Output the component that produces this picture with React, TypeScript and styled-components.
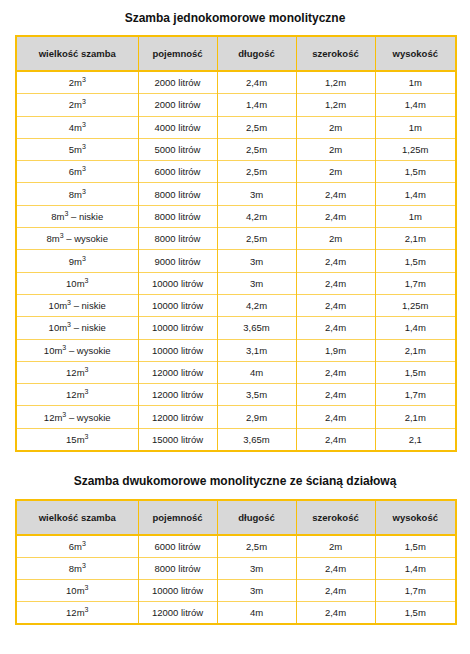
import React from 'react';
import styled, { createGlobalStyle } from 'styled-components';

const GlobalStyle = createGlobalStyle`
    html, body {
        margin: 0;
        padding: 0;
        background: #fff;
    }
    body {
        font-family: 'Liberation Sans', Arial, sans-serif;
        color: #1a1a1a;
    }
`;

const Page = styled.div`
    width: 470px;
    padding: 9px 15px 0 15px;
    box-sizing: border-box;
`;

const Title = styled.h2<{ $top: number }>`
    margin: ${(p) => p.$top}px 0 0 0;
    height: 18px;
    line-height: 18px;
    font-size: 12px;
    font-weight: 700;
    text-align: center;
    color: #111;
`;

const Table = styled.table<{ $top: number }>`
    margin-top: ${(p) => p.$top}px;
    width: 440px;
    border-collapse: collapse;
    table-layout: fixed;
    border: 2px solid #f8bf06;
`;

const HeadCell = styled.th`
    height: 33px;
    padding: 0;
    background: #d8d8d8;
    font-size: 9.5px;
    font-weight: 700;
    text-align: center;
    color: #1a1a1a;
    border-left: 1.5px solid #f8bf06;
    border-bottom: 2px solid #f8bf06;
`;

const Cell = styled.td<{ $h: number }>`
    height: ${(p) => p.$h}px;
    padding: 0;
    font-size: 9.5px;
    text-align: center;
    color: #1a1a1a;
    border-left: 1.5px solid #f8c21a;
    border-top: 1px solid #fbd35a;
`;

const Sup = styled.sup`
    font-size: 7px;
    line-height: 0;
    vertical-align: 4px;
`;

type Row = [string, string, string, string, string, string?];

const headers = ['wielkość szamba', 'pojemność', 'długość', 'szerokość', 'wysokość'];

const single: Row[] = [
    ['2', '2000 litrów', '2,4m', '1,2m', '1m'],
    ['2', '2000 litrów', '1,4m', '1,2m', '1,4m'],
    ['4', '4000 litrów', '2,5m', '2m', '1m'],
    ['5', '5000 litrów', '2,5m', '2m', '1,25m'],
    ['6', '6000 litrów', '2,5m', '2m', '1,5m'],
    ['8', '8000 litrów', '3m', '2,4m', '1,4m'],
    ['8', '8000 litrów', '4,2m', '2,4m', '1m', ' – niskie'],
    ['8', '8000 litrów', '2,5m', '2m', '2,1m', ' – wysokie'],
    ['9', '9000 litrów', '3m', '2,4m', '1,5m'],
    ['10', '10000 litrów', '3m', '2,4m', '1,7m'],
    ['10', '10000 litrów', '4,2m', '2,4m', '1,25m', ' – niskie'],
    ['10', '10000 litrów', '3,65m', '2,4m', '1,4m', ' – niskie'],
    ['10', '10000 litrów', '3,1m', '1,9m', '2,1m', ' – wysokie'],
    ['12', '12000 litrów', '4m', '2,4m', '1,5m'],
    ['12', '12000 litrów', '3,5m', '2,4m', '1,7m'],
    ['12', '12000 litrów', '2,9m', '2,4m', '2,1m', ' – wysokie'],
    ['15', '15000 litrów', '3,65m', '2,4m', '2,1'],
];

const double: Row[] = [
    ['6', '6000 litrów', '2,5m', '2m', '1,5m'],
    ['8', '8000 litrów', '3m', '2,4m', '1,4m'],
    ['10', '10000 litrów', '3m', '2,4m', '1,7m'],
    ['12', '12000 litrów', '4m', '2,4m', '1,5m'],
];

const colWidths = [122, 79, 79, 79, 81];

const SizeTable: React.FC<{ rows: Row[]; top: number; rowH: number }> = ({ rows, top, rowH }) => (
    <Table $top={top}>
        <colgroup>
            {colWidths.map((w, i) => (
                <col key={i} style={{ width: w }} />
            ))}
        </colgroup>
        <thead>
            <tr>
                {headers.map((h) => (
                    <HeadCell key={h}>{h}</HeadCell>
                ))}
            </tr>
        </thead>
        <tbody>
            {rows.map((r, i) => (
                <tr key={i}>
                    <Cell $h={rowH}>
                        {r[0]}m<Sup>3</Sup>
                        {r[5] ?? ''}
                    </Cell>
                    <Cell $h={rowH}>{r[1]}</Cell>
                    <Cell $h={rowH}>{r[2]}</Cell>
                    <Cell $h={rowH}>{r[3]}</Cell>
                    <Cell $h={rowH}>{r[4]}</Cell>
                </tr>
            ))}
        </tbody>
    </Table>
);

export default function App() {
    return (
        <Page>
            <GlobalStyle />
            <Title $top={0}>Szamba jednokomorowe monolityczne</Title>
            <SizeTable rows={single} top={8} rowH={21.3} />
            <Title $top={20}>Szamba dwukomorowe monolityczne ze ścianą działową</Title>
            <SizeTable rows={double} top={9} rowH={21} />
        </Page>
    );
}
